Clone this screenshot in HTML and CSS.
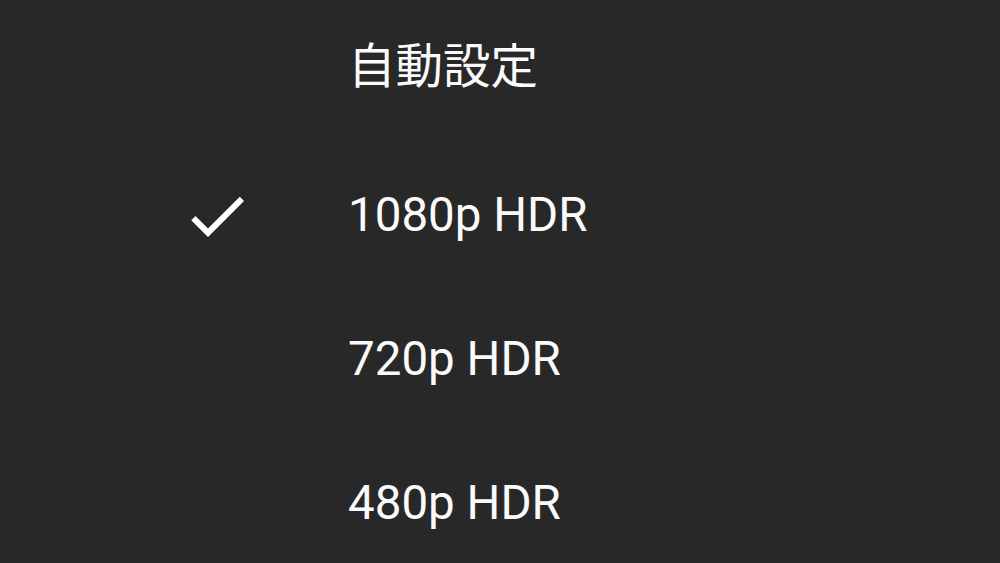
FILE: index.html
```html
<!DOCTYPE html>
<html lang="ja">
<head>
<meta charset="utf-8">
<title>画質</title>
<link rel="stylesheet" href="styles.css">
</head>
<body>
<ul class="menu">
  <li class="item item-cjk"><span class="icon"></span><span class="label">自動設定</span></li>
  <li class="item selected">
    <span class="icon">
      <svg viewBox="0 0 24 24" width="72" height="72"><path fill="#fff" d="M9 16.17L4.83 12l-1.42 1.41L9 19 21 7l-1.41-1.41z"/></svg>
    </span>
    <span class="label">1080p HDR</span>
  </li>
  <li class="item"><span class="icon"></span><span class="label">720p HDR</span></li>
  <li class="item"><span class="icon"></span><span class="label">480p HDR</span></li>
</ul>
</body>
</html>
```
FILE: styles.css
```css
html, body {
  margin: 0;
  padding: 0;
  background: #282828;
  height: 100%;
  overflow: hidden;
}
.menu {
  list-style: none;
  margin: 0;
  padding: 0;
  font-family: Roboto, "Noto Sans CJK JP", sans-serif;
  font-size: 47.5px;
  color: #fafafa;
}
.item {
  box-sizing: border-box;
  height: 144px;
  display: flex;
  align-items: center;
  padding-left: 181px;
  gap: 95px;
  line-height: 1;
}
.item-cjk {
  padding-bottom: 9px;
}
.icon {
  width: 72px;
  height: 72px;
  flex: none;
  display: flex;
}
.icon svg {
  display: block;
}
.label {
  white-space: nowrap;
}
```
